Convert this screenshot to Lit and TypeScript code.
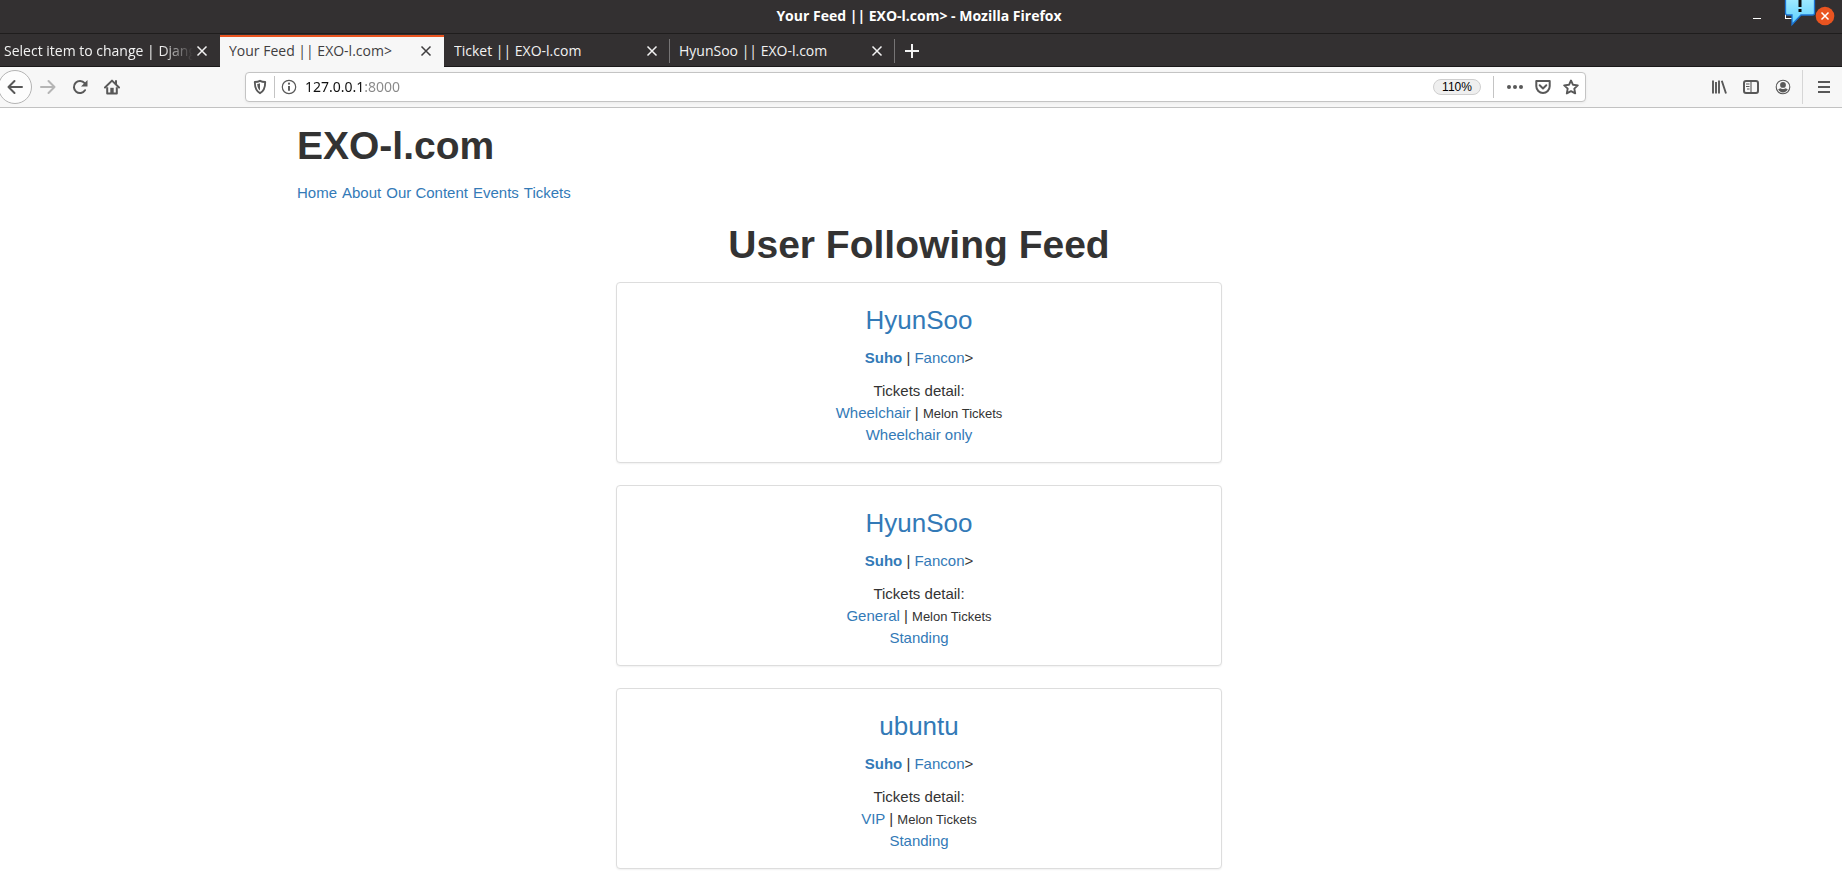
import { LitElement, html, css, svg } from "lit";
import { customElement, property } from "lit/decorators.js";
import { classMap } from "lit/directives/class-map.js";

interface Tab {
  title: string;
  active?: boolean;
  clipped?: boolean;
}

interface Post {
  user: string;
  artist: string;
  event: string;
  ticket: string;
  seller: string;
  detail: string;
}

const tabs: Tab[] = [
  { title: "Select item to change | Djang", clipped: true },
  { title: "Your Feed || EXO-l.com>", active: true },
  { title: "Ticket || EXO-l.com" },
  { title: "HyunSoo || EXO-l.com" },
];

const posts: Post[] = [
  { user: "HyunSoo", artist: "Suho", event: "Fancon", ticket: "Wheelchair", seller: "Melon Tickets", detail: "Wheelchair only" },
  { user: "HyunSoo", artist: "Suho", event: "Fancon", ticket: "General", seller: "Melon Tickets", detail: "Standing" },
  { user: "ubuntu", artist: "Suho", event: "Fancon", ticket: "VIP", seller: "Melon Tickets", detail: "Standing" },
];

const glyphs = {
  back: svg`<path d="M15 8H1.5M7.5 2L1.5 8l6 6" fill="none" stroke="currentColor" stroke-width="2" stroke-linecap="round" stroke-linejoin="round"/>`,
  forward: svg`<path d="M1 8h13.5M8.5 2l6 6-6 6" fill="none" stroke="currentColor" stroke-width="2" stroke-linecap="round" stroke-linejoin="round"/>`,
  reload: svg`<path d="M13 11.200A6 6 0 1 1 12.600 4.200" fill="none" stroke="currentColor" stroke-width="2" stroke-linecap="round"/><path d="M15.500 1v6.500H9z" fill="currentColor"/>`,
  home: svg`<path d="M1 8.500L8 1.600l7 6.900M12 2v3" fill="none" stroke="currentColor" stroke-width="2" stroke-linecap="round" stroke-linejoin="round"/><path d="M3.200 8.200V14.600h9.600V8.200" fill="none" stroke="currentColor" stroke-width="2" stroke-linejoin="round"/><path d="M6.300 8.800h3.400v6H6.300z" fill="currentColor"/>`,
  shield: svg`<path d="M8 1.8c1.6.9 3.5 1.2 5.2 1.2 0 5.400-1 9-5.200 11.200C3.800 12 2.800 8.400 2.800 3 4.500 3 6.400 2.700 8 1.800z" fill="none" stroke="currentColor" stroke-width="1.900" stroke-linejoin="round"/><path d="M8 4.300v7.200c-2-1.500-2.600-3.700-2.800-6.600C6.200 4.800 7.200 4.600 8 4.300z" fill="currentColor"/>`,
  info: svg`<circle cx="8" cy="8" r="6.700" fill="none" stroke="currentColor" stroke-width="1.200"/><circle cx="8" cy="4.700" r="1.100" fill="currentColor"/><path d="M8 7v4.800" stroke="currentColor" stroke-width="1.900"/>`,
  dots: svg`<circle cx="2" cy="8" r="2" fill="currentColor"/><circle cx="8" cy="8" r="2" fill="currentColor"/><circle cx="14" cy="8" r="2" fill="currentColor"/>`,
  pocket: svg`<path d="M1.300 2h13.400v5.300a6.700 6.700 0 0 1-13.400 0z" fill="none" stroke="currentColor" stroke-width="2" stroke-linejoin="round"/><path d="M4.700 6.300L8 9.400l3.300-3.100" fill="none" stroke="currentColor" stroke-width="2" stroke-linecap="round" stroke-linejoin="round"/>`,
  star: svg`<path d="M8 1.500l2 4.300 4.800.6-3.500 3.200.9 4.800L8 12.100l-4.200 2.300.9-4.800L1.200 6.400 6 5.800z" fill="none" stroke="currentColor" stroke-width="1.900" stroke-linejoin="round"/>`,
  library: svg`<path d="M2 1.500v13M5 3v11.500M8 1.500v13M10.800 1.800l4.200 12.700" fill="none" stroke="currentColor" stroke-width="1.900"/>`,
  sidebar: svg`<rect x="1" y="2" width="14" height="12" rx="2" fill="none" stroke="currentColor" stroke-width="2"/><path d="M8 2v12M3 5h3.500M3 7.500h3.500M4 10h2.500" stroke="currentColor" stroke-width="1.100"/>`,
  account: svg`<circle cx="8" cy="8" r="6.800" fill="none" stroke="currentColor" stroke-width="1.100"/><circle cx="8" cy="5.900" r="2.900" fill="currentColor"/><path d="M3.200 10c1 0 1.400-.5 2.300-.8.700.9 4.300.9 5 0 .9.300 1.300.8 2.300.8-.8 2.200-2.700 3.400-4.800 3.400S4 12.200 3.200 10z" fill="currentColor"/>`,
  menu: svg`<path d="M2 3h12M2 8h12M2 13h12" stroke="currentColor" stroke-width="2"/>`,
  close: svg`<path d="M3.500 3.500l9 9M12.500 3.500l-9 9" stroke="currentColor" stroke-width="1.500"/>`,
  plus: svg`<path d="M8 1v14M1 8h14" stroke="currentColor" stroke-width="2"/>`,
};

const icon = (name: keyof typeof glyphs) =>
  html`<svg class="icon" viewBox="0 0 16 16" width="16" height="16" aria-hidden="true">${glyphs[name]}</svg>`;

@customElement("browser-chrome")
class BrowserChrome extends LitElement {
  static styles = css`
    :host {
      display: block;
      font-family: "Noto Sans", "Open Sans", sans-serif;
      font-size: 14px;
      color: #f2f2f2;
    }
    button {
      display: flex;
      align-items: center;
      justify-content: center;
      border: 0;
      padding: 0;
      background: none;
      color: inherit;
      font: inherit;
    }
    .icon {
      display: block;
      flex: none;
    }
    .titlebar {
      position: relative;
      display: grid;
      grid-template-columns: 1fr auto 1fr;
      align-items: center;
      height: 34px;
      padding: 0 4px 2px 0;
      box-sizing: border-box;
      background: #333031;
      border-bottom: 1px solid #1f1d1d;
    }
    .caption {
      grid-column: 2;
      font-family: "Open Sans", sans-serif;
      font-size: 14px;
      font-weight: 700;
      color: #fff;
    }
    .controls {
      display: flex;
      justify-content: flex-end;
      align-items: center;
      gap: 17px;
      padding-right: 3px;
    }
    .notice {
      position: absolute;
      top: 0;
      right: 24px;
      display: block;
    }
    .tabs {
      display: flex;
      height: 33px;
      box-sizing: border-box;
      padding-top: 1px;
      background: #333031;
      border-bottom: 1px solid #1a1819;
      font-family: "Open Sans", sans-serif;
    }
    .tab {
      flex: 0 1 225px;
      display: flex;
      align-items: center;
      min-width: 0;
      box-sizing: border-box;
      padding: 0 9px 2px;
      border-top: 2px solid transparent;
      margin-bottom: -1px;
      position: relative;
    }
    .tab.clipped {
      flex-basis: 220px;
      padding-left: 4px;
    }
    .tab.plain::after {
      content: "";
      position: absolute;
      right: 0;
      top: 2px;
      bottom: 4px;
      width: 1px;
      background: #767475;
    }
    .tab.active {
      flex-basis: 224px;
      margin-right: 1px;
      background: #f7f7f7;
      color: #3f3e3f;
      border-top-color: #e95420;
    }
    .label {
      flex: 1;
      overflow: hidden;
      white-space: nowrap;
      line-height: 20px;
    }
    .tab.clipped .label {
      mask-image: linear-gradient(to right, #000 calc(100% - 32px), transparent);
    }
    .close {
      width: 18px;
      height: 20px;
    }
    .add {
      width: 34px;
    }
    .toolbar {
      display: flex;
      align-items: center;
      height: 41px;
      box-sizing: border-box;
      padding-right: 2px;
      background: #f7f7f7;
      border-bottom: 1px solid #c2c2c2;
      color: #585858;
    }
    .tool {
      flex: none;
      width: 32px;
      height: 34px;
    }
    .tool.back {
      border: 1px solid #b4b4b4;
      border-radius: 50%;
      background: #fdfdfd;
      width: 34px;
      margin-left: -2px;
    }
    .tool.off {
      color: #b5b5b5;
    }
    .spacer {
      flex: 0 1 117px;
    }
    .rule {
      flex: none;
      width: 1px;
      height: 34px;
      background: #d6d6d6;
      margin: 0 5px 0 3px;
    }
    .address {
      flex: 1;
      display: flex;
      align-items: center;
      height: 30px;
      box-sizing: border-box;
      padding: 0 6px;
      border: 1px solid #c4c4c4;
      border-radius: 4px;
      background: #fff;
      box-shadow: 0 1px 3px rgba(0, 0, 0, 0.06);
    }
    .address .split {
      width: 1px;
      height: 22px;
      background: #c4c4c4;
    }
    .address button {
      width: 28px;
      height: 24px;
    }
    .address button.shield {
      width: 16px;
      margin-right: 6px;
    }
    .url {
      flex: 1;
      min-width: 0;
      border: 0;
      padding: 0;
      margin-left: 2px;
      outline: 0;
      font: inherit;
      line-height: 24px;
      background: linear-gradient(to right, #111 60px, #888 60px);
      -webkit-background-clip: text;
      background-clip: text;
      -webkit-text-fill-color: transparent;
    }
    .address button.zoom {
      width: 48px;
      height: 16px;
      margin-right: 12px;
      border: 1px solid #cfcfcf;
      border-radius: 8px;
      background: #efefef;
      color: #000;
      font-family: "Liberation Sans", Arial, sans-serif;
      font-size: 12px;
    }
    .address .actions {
      display: flex;
      padding-left: 7px;
      margin-right: -6px;
    }
  `;

  render() {
    return html`
      <header class="titlebar">
        <span class="caption">Your Feed || EXO-l.com&gt; - Mozilla Firefox</span>
        <div class="controls">
          <button aria-label="Minimize">
            <svg width="16" height="18" viewBox="0 0 16 18"><path d="M4 11.500h8" stroke="#fff" stroke-width="1" /></svg>
          </button>
          <button aria-label="Maximize">
            <svg width="16" height="18" viewBox="0 0 16 18"><rect x="3.500" y="4.500" width="8" height="7" fill="none" stroke="#fff" /></svg>
          </button>
          <button aria-label="Close window">
            <svg width="20" height="20" viewBox="0 0 20 20">
              <circle cx="10" cy="10" r="9.300" fill="#e95420" />
              <path d="M6.500 6.500l7 7M13.500 6.500l-7 7" stroke="#fff" stroke-width="1.500" />
            </svg>
          </button>
        </div>
        <svg class="notice" width="34" height="27" viewBox="0 0 34 27" aria-hidden="true">
          <defs>
            <linearGradient id="bubble" x1="0" y1="0" x2="0" y2="1">
              <stop offset="0" stop-color="#a5ecff" />
              <stop offset="1" stop-color="#5ccfff" />
            </linearGradient>
          </defs>
          <path d="M1.500-3v16q0 2 2 2h4.500v9.500l9-9.500h11.500q2 0 2-2v-16z" fill="url(#bubble)" stroke="#1c74d4" stroke-width="1.300" />
          <path d="M14.500 0h3v7h-3zM14.500 9h3v3h-3z" fill="#0b0b0b" />
        </svg>
      </header>
      <nav class="tabs" aria-label="Tabs">
        ${tabs.map(
          (t) => html`<div class=${classMap({ tab: true, active: !!t.active, clipped: !!t.clipped, plain: !t.active && !t.clipped })}>
            <span class="label">${t.title}</span>
            <button class="close" aria-label="Close tab">${icon("close")}</button>
          </div>`
        )}
        <button class="add" aria-label="New tab">${icon("plus")}</button>
      </nav>
      <div class="toolbar">
        <button class="tool back" aria-label="Back">${icon("back")}</button>
        <button class="tool off" aria-label="Forward">${icon("forward")}</button>
        <button class="tool" aria-label="Reload">${icon("reload")}</button>
        <button class="tool" aria-label="Home">${icon("home")}</button>
        <span class="spacer"></span>
        <div class="address">
          <button class="shield" aria-label="Tracking protection">${icon("shield")}</button>
          <span class="split"></span>
          <button aria-label="Site information">${icon("info")}</button>
          <input class="url" aria-label="Address" value="127.0.0.1:8000" />
          <button class="zoom">110%</button>
          <span class="split"></span>
          <div class="actions">
            <button aria-label="Page actions">${icon("dots")}</button>
            <button aria-label="Save to Pocket">${icon("pocket")}</button>
            <button aria-label="Bookmark">${icon("star")}</button>
          </div>
        </div>
        <span class="spacer"></span>
        <button class="tool" aria-label="Library">${icon("library")}</button>
        <button class="tool" aria-label="Sidebars">${icon("sidebar")}</button>
        <button class="tool" aria-label="Account">${icon("account")}</button>
        <span class="rule"></span>
        <button class="tool" aria-label="Menu">${icon("menu")}</button>
      </div>
    `;
  }
}

@customElement("feed-post")
class FeedPost extends LitElement {
  @property({ attribute: false }) post!: Post;

  static styles = css`
    :host {
      display: block;
      padding: 23px 16px 16px;
      border: 1px solid #ddd;
      border-radius: 4px;
      background: #fff;
      box-shadow: 0 1px 2px rgba(0, 0, 0, 0.06);
      text-align: center;
    }
    a {
      color: #337ab7;
      text-decoration: none;
    }
    .user {
      margin: 0 0 12px;
      font-size: 26px;
      line-height: 29px;
      font-weight: 400;
    }
    .line {
      margin: 0 0 11px;
    }
    .tickets {
      margin: 0;
    }
    .seller {
      font-size: 13px;
      line-height: 1;
    }
  `;

  render() {
    const p = this.post;
    return html`
      <h3 class="user"><a href="#">${p.user}</a></h3>
      <p class="line"><a href="#"><strong>${p.artist}</strong></a> | <a href="#">${p.event}</a>&gt;</p>
      <p class="tickets">
        Tickets detail:<br />
        <a href="#">${p.ticket}</a> | <small class="seller">${p.seller}</small><br />
        <a href="#">${p.detail}</a>
      </p>
    `;
  }
}

@customElement("app-root")
class AppRoot extends LitElement {
  static styles = css`
    :host {
      display: block;
      min-height: 100vh;
      background: #fff;
    }
    .page {
      max-width: 1244px;
      margin: 0 auto;
      padding: 16px 20px 0 16px;
      font-family: "Liberation Sans", Arial, sans-serif;
      font-size: 15px;
      line-height: 22px;
      color: #333;
    }
    h1 {
      margin: 0;
      font-size: 39px;
      line-height: 44px;
      font-weight: 700;
    }
    .links {
      display: flex;
      flex-wrap: wrap;
      gap: 5px;
      margin: 14px 0 19px;
    }
    .links a {
      color: #337ab7;
      text-decoration: none;
    }
    .feed {
      display: grid;
      gap: 22px;
      max-width: 606px;
      margin: 0 auto;
    }
    .heading {
      margin-bottom: 15px;
      text-align: center;
    }
  `;

  render() {
    return html`
      <browser-chrome></browser-chrome>
      <main class="page">
        <h1>EXO-l.com</h1>
        <nav class="links">
          ${["Home", "About", "Our Content", "Events", "Tickets"].map((t) => html`<a href="#">${t}</a>`)}
        </nav>
        <h1 class="heading">User Following Feed</h1>
        <section class="feed">${posts.map((p) => html`<feed-post .post=${p}></feed-post>`)}</section>
      </main>
    `;
  }
}
